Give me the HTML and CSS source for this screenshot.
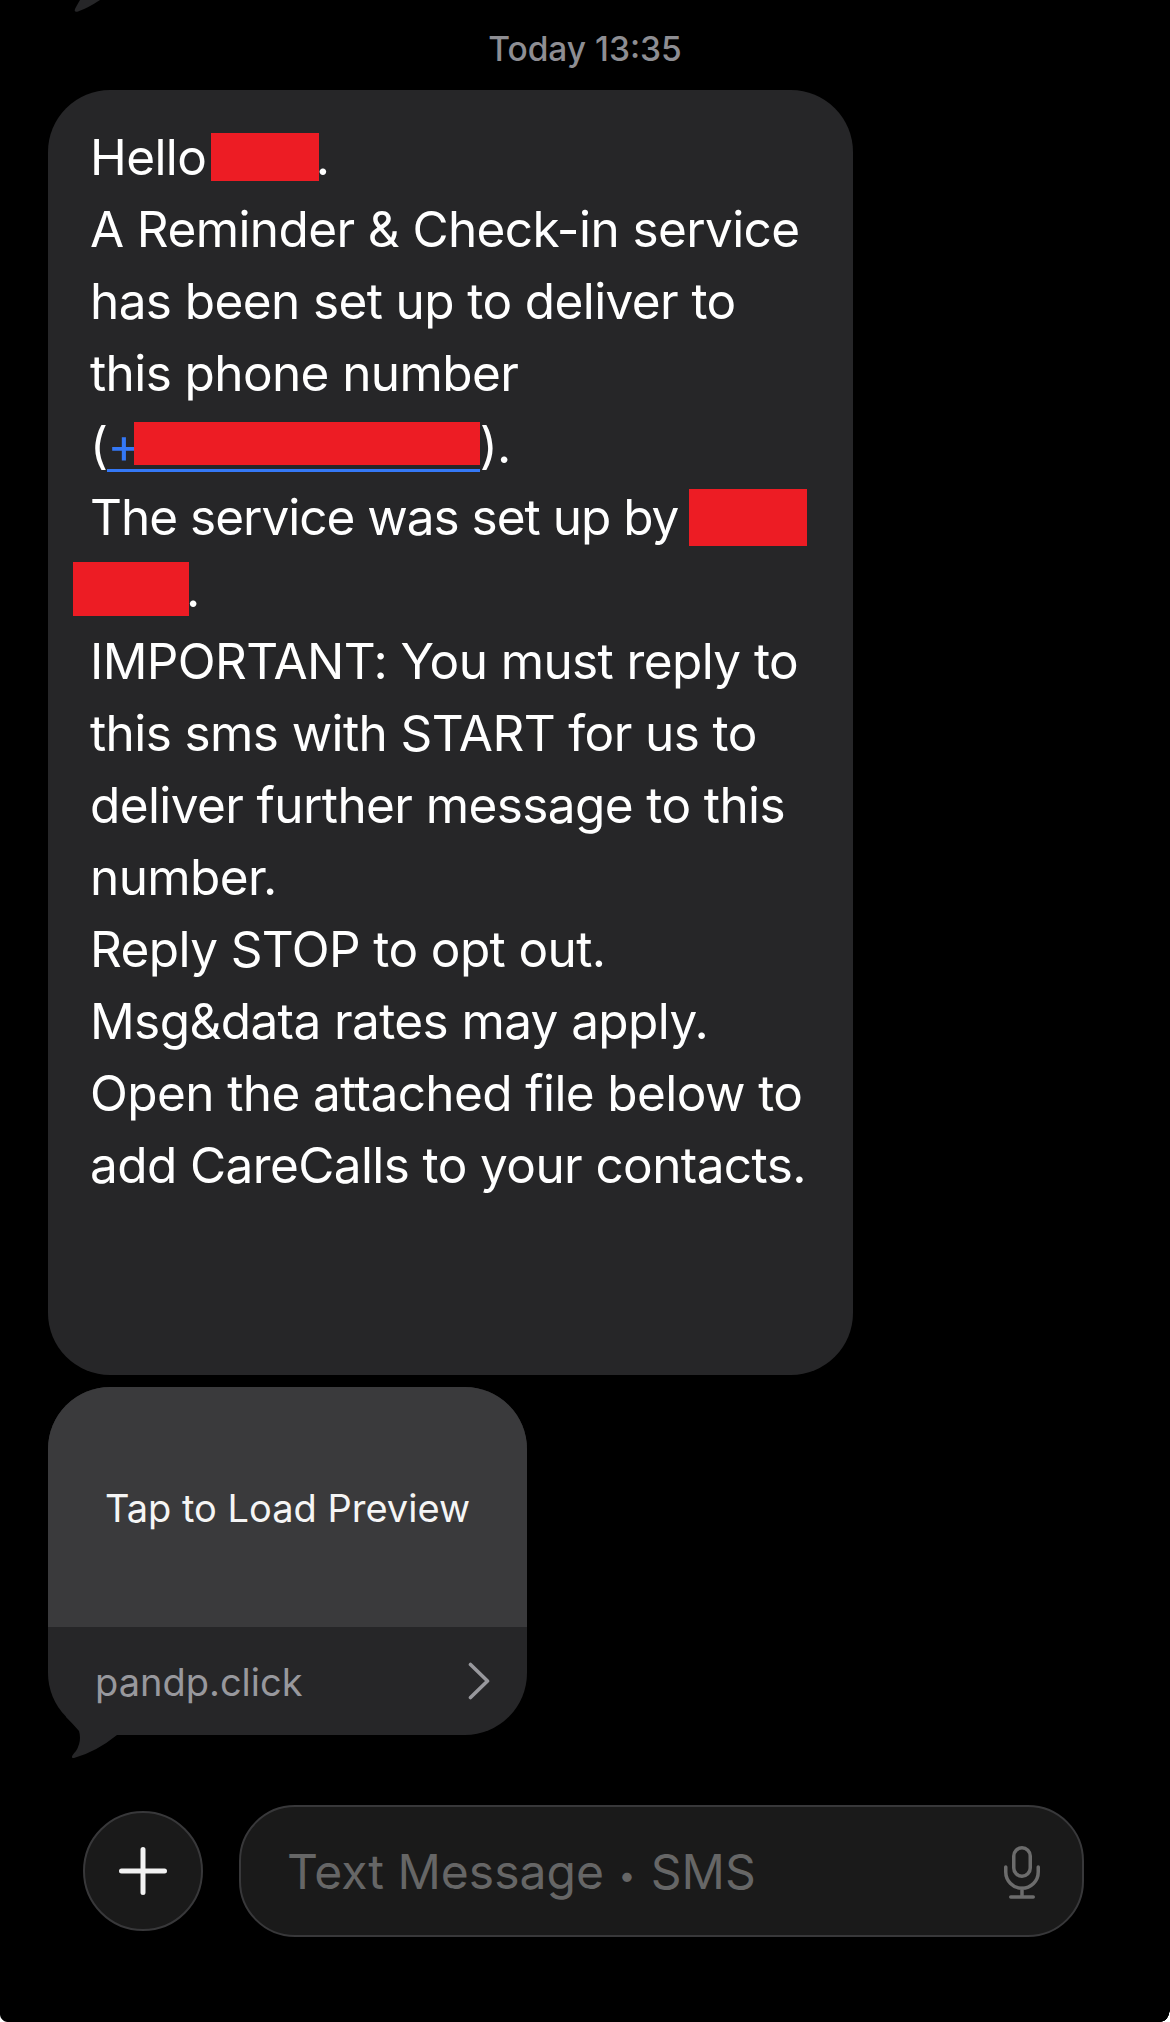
FILE: index.html
```html
<!DOCTYPE html>
<html lang="en">
<head>
  <meta charset="UTF-8" />
  <title>Messages</title>
  <link rel="stylesheet" href="styles.css">
</head>
<body>

  <!-- Tail of the previous bubble, cut off by the screenshot -->
  <svg class="prev-tail" width="40" height="12" viewBox="0 0 40 12">
    <path d="M20 0 L40 0 Q28 8 18 11.500 Q14 12.500 15 9 Q17 5 20 0 Z" fill="#262628" />
  </svg>

  <div class="timestamp">Today 13:35</div>

  <div class="bubble text-bubble">
    Hello <span class="redact redact-hello"></span>.<br>
    A Reminder &amp; Check-in service<br>
    has been set up to deliver to<br>
    this phone number<br>
    (<span class="phone-link">+<span class="redact redact-phone"></span></span>).<br>
    <span class="tight-line">The service was set up by</span> <span class="redact redact-first"></span><br>
    <span class="redact redact-last"></span>.<br>
    IMPORTANT: You must reply to<br>
    this sms with START for us to<br>
    deliver further message to this<br>
    number.<br>
    Reply STOP to opt out.<br>
    Msg&amp;data rates may apply.<br>
    Open the attached file below to<br>
    add CareCalls to your contacts.
  </div>

  <div class="bubble link-bubble">
    <div class="link-preview">Tap to Load Preview</div>
    <div class="link-footer">
      <span class="link-domain">pandp.click</span>
      <svg width="22" height="38" viewBox="0 0 22 38">
        <path d="M2.500 2.500 L19.500 19 L2.500 35.500" fill="none" stroke="#98989d" stroke-width="3.600" stroke-linecap="round" stroke-linejoin="round" />
      </svg>
    </div>
    <svg class="bubble-tail" width="70" height="50" viewBox="0 0 70 50">
      <path d="M10 9 Q17 16 23 23 Q26 33 20 43 Q13 50.500 18 50 Q40 44 61 27 L70 27 L70 0 L10 0 Z" fill="#262628" />
    </svg>
  </div>

  <div class="composer">
    <div class="plus-btn">
      <svg width="48" height="48" viewBox="0 0 48 48">
        <path d="M24 2.500 V45.500 M2.500 24 H45.500" stroke="#f2f2f2" stroke-width="5" stroke-linecap="round" />
      </svg>
    </div>
    <div class="message-input">
      <span class="placeholder">Text Message <span class="placeholder-dot">•</span> SMS</span>
      <svg width="38" height="56" viewBox="0 0 38 56">
        <rect x="10.750" y="4.750" width="16.500" height="28.500" rx="8.250" fill="none" stroke="#6c6c6c" stroke-width="3.500" />
        <path d="M2.750 24 V29 A16.250 16.250 0 0 0 35.250 29 V24 M19 45 V54 M7.750 54 H30.250" fill="none" stroke="#6c6c6c" stroke-width="3.500" stroke-linecap="round" />
      </svg>
    </div>
  </div>

  <!-- Rounded corners of the screenshot -->
  <div class="shot-corner shot-corner-left"></div>
  <div class="shot-corner shot-corner-right"></div>

</body>
</html>
```

FILE: styles.css
```css
* {
  box-sizing: border-box;
  margin: 0;
  padding: 0;
}

html, body {
  height: 100%;
  background-color: #000;
  font-family: Inter, 'Noto Sans', sans-serif;
  color: #fff;
  overflow: hidden;
}

body {
  padding: 31px 0 0 48px;
}

.prev-tail {
  position: absolute;
  top: 0;
  left: 60px;
}

.shot-corner {
  position: absolute;
  bottom: 0;
}

.shot-corner-left {
  left: 0;
  width: 8px;
  height: 8px;
  background: radial-gradient(circle at 100% 0, #000 7.500px, #fff 8.500px);
}

.shot-corner-right {
  right: 0;
  width: 9px;
  height: 13px;
  background: radial-gradient(9px 13px at 0 0, #000 96%, #fff 100%);
}

.timestamp {
  width: 1074px;
  text-align: center;
  font-size: 33.500px;
  font-weight: 500;
  line-height: 36px;
  color: #8e8e93;
}

.bubble {
  background-color: #262628;
  border-radius: 62px;
}

.text-bubble {
  width: 805px;
  height: 1285px;
  margin-top: 23px;
  padding: 31px 0 0 42px;
  font-size: 49.500px;
  letter-spacing: -0.600px;
  line-height: 72px;
  white-space: nowrap;
}

.tight-line {
  letter-spacing: -1px;
}

.redact {
  display: inline-block;
  background-color: #ed1c24;
}

.redact-hello {
  width: 108px;
  height: 48px;
  vertical-align: -6px;
  margin: 0 -3px 0 -9px;
}

.redact-phone {
  width: 346px;
  height: 43px;
  vertical-align: -2px;
  margin-left: -6px;
}

.redact-first {
  width: 118px;
  height: 57px;
  vertical-align: -11px;
  margin-left: -3px;
}

.redact-last {
  width: 116px;
  height: 54px;
  vertical-align: -9px;
  margin: 0 -3px 0 -17px;
}

.phone-link {
  color: #3478f6;
  background: linear-gradient(#3478f6, #3478f6) 0 calc(100% - 3px) / 100% 3px no-repeat;
}

.link-bubble {
  position: relative;
  width: 479px;
  height: 348px;
  margin-top: 12px;
}

.link-preview {
  display: flex;
  align-items: center;
  justify-content: center;
  height: 240px;
  padding-top: 2px;
  font-size: 38px;
  color: #f5f5f5;
  background-color: #3a3a3c;
  border-radius: 62px 62px 0 0;
}

.link-footer {
  display: flex;
  align-items: center;
  justify-content: space-between;
  height: 108px;
  padding: 0 37px 0 47px;
}

.link-domain {
  padding-top: 2px;
  font-size: 38px;
  color: #98989d;
}

.bubble-tail {
  position: absolute;
  left: 8px;
  bottom: -23px;
}

.composer {
  display: flex;
  align-items: center;
  gap: 36px;
  margin-top: 70px;
  margin-left: 35px;
}

.plus-btn {
  display: flex;
  align-items: center;
  justify-content: center;
  width: 120px;
  height: 120px;
  background-color: #1a1a1a;
  border: 2px solid #38383a;
  border-radius: 50%;
}

.message-input {
  display: flex;
  align-items: center;
  justify-content: space-between;
  width: 845px;
  height: 132px;
  padding: 0 41px 0 46px;
  background-color: #1a1a1a;
  border: 2px solid #38383a;
  border-radius: 56px;
}

.placeholder {
  font-size: 48px;
  color: #666;
}

.placeholder-dot {
  margin: 0 2px 0 1px;
  font-size: 30px;
  vertical-align: 3px;
}
```
